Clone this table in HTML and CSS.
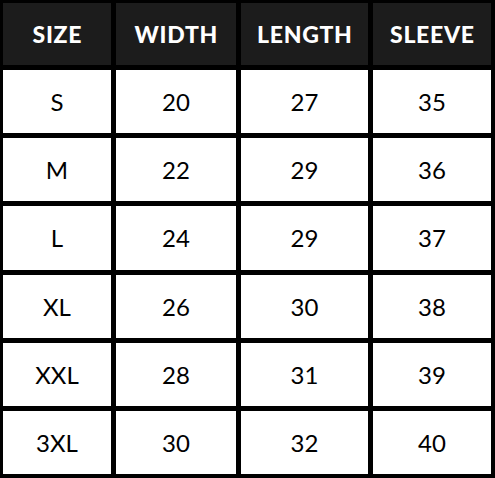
FILE: index.html
```html
<!DOCTYPE html>
<html>
<head>
<meta charset="utf-8">
<link rel="stylesheet" href="styles.css">
</head>
<body>
<div class="chart">
  <div class="cell head">SIZE</div>
  <div class="cell head">WIDTH</div>
  <div class="cell head">LENGTH</div>
  <div class="cell head">SLEEVE</div>

  <div class="cell">S</div><div class="cell">20</div><div class="cell">27</div><div class="cell">35</div>
  <div class="cell">M</div><div class="cell">22</div><div class="cell">29</div><div class="cell">36</div>
  <div class="cell">L</div><div class="cell">24</div><div class="cell">29</div><div class="cell">37</div>
  <div class="cell">XL</div><div class="cell">26</div><div class="cell">30</div><div class="cell">38</div>
  <div class="cell">XXL</div><div class="cell">28</div><div class="cell">31</div><div class="cell">39</div>
  <div class="cell">3XL</div><div class="cell">30</div><div class="cell">32</div><div class="cell">40</div>
</div>
</body>
</html>
```
FILE: styles.css
```css
html, body {
  margin: 0;
  padding: 0;
  background: #000;
}
.chart {
  box-sizing: border-box;
  width: 495px;
  height: 478px;
  padding: 3px 4px 4px 3px;
  background: #000;
  display: grid;
  grid-template-columns: 108px 120px 127px 118px;
  grid-template-rows: 62px repeat(6, 1fr);
  gap: 5px;
  font-family: "Lato", "Liberation Sans", sans-serif;
}
.cell {
  background: #fff;
  color: #000;
  display: flex;
  align-items: center;
  justify-content: center;
  font-size: 24px;
  font-weight: 400;
}
.head {
  background: #1c1c1c;
  color: #fff;
  font-weight: 900;
  font-size: 23px;
  letter-spacing: 0.7px;
  padding-left: 0.7px;
}
```
